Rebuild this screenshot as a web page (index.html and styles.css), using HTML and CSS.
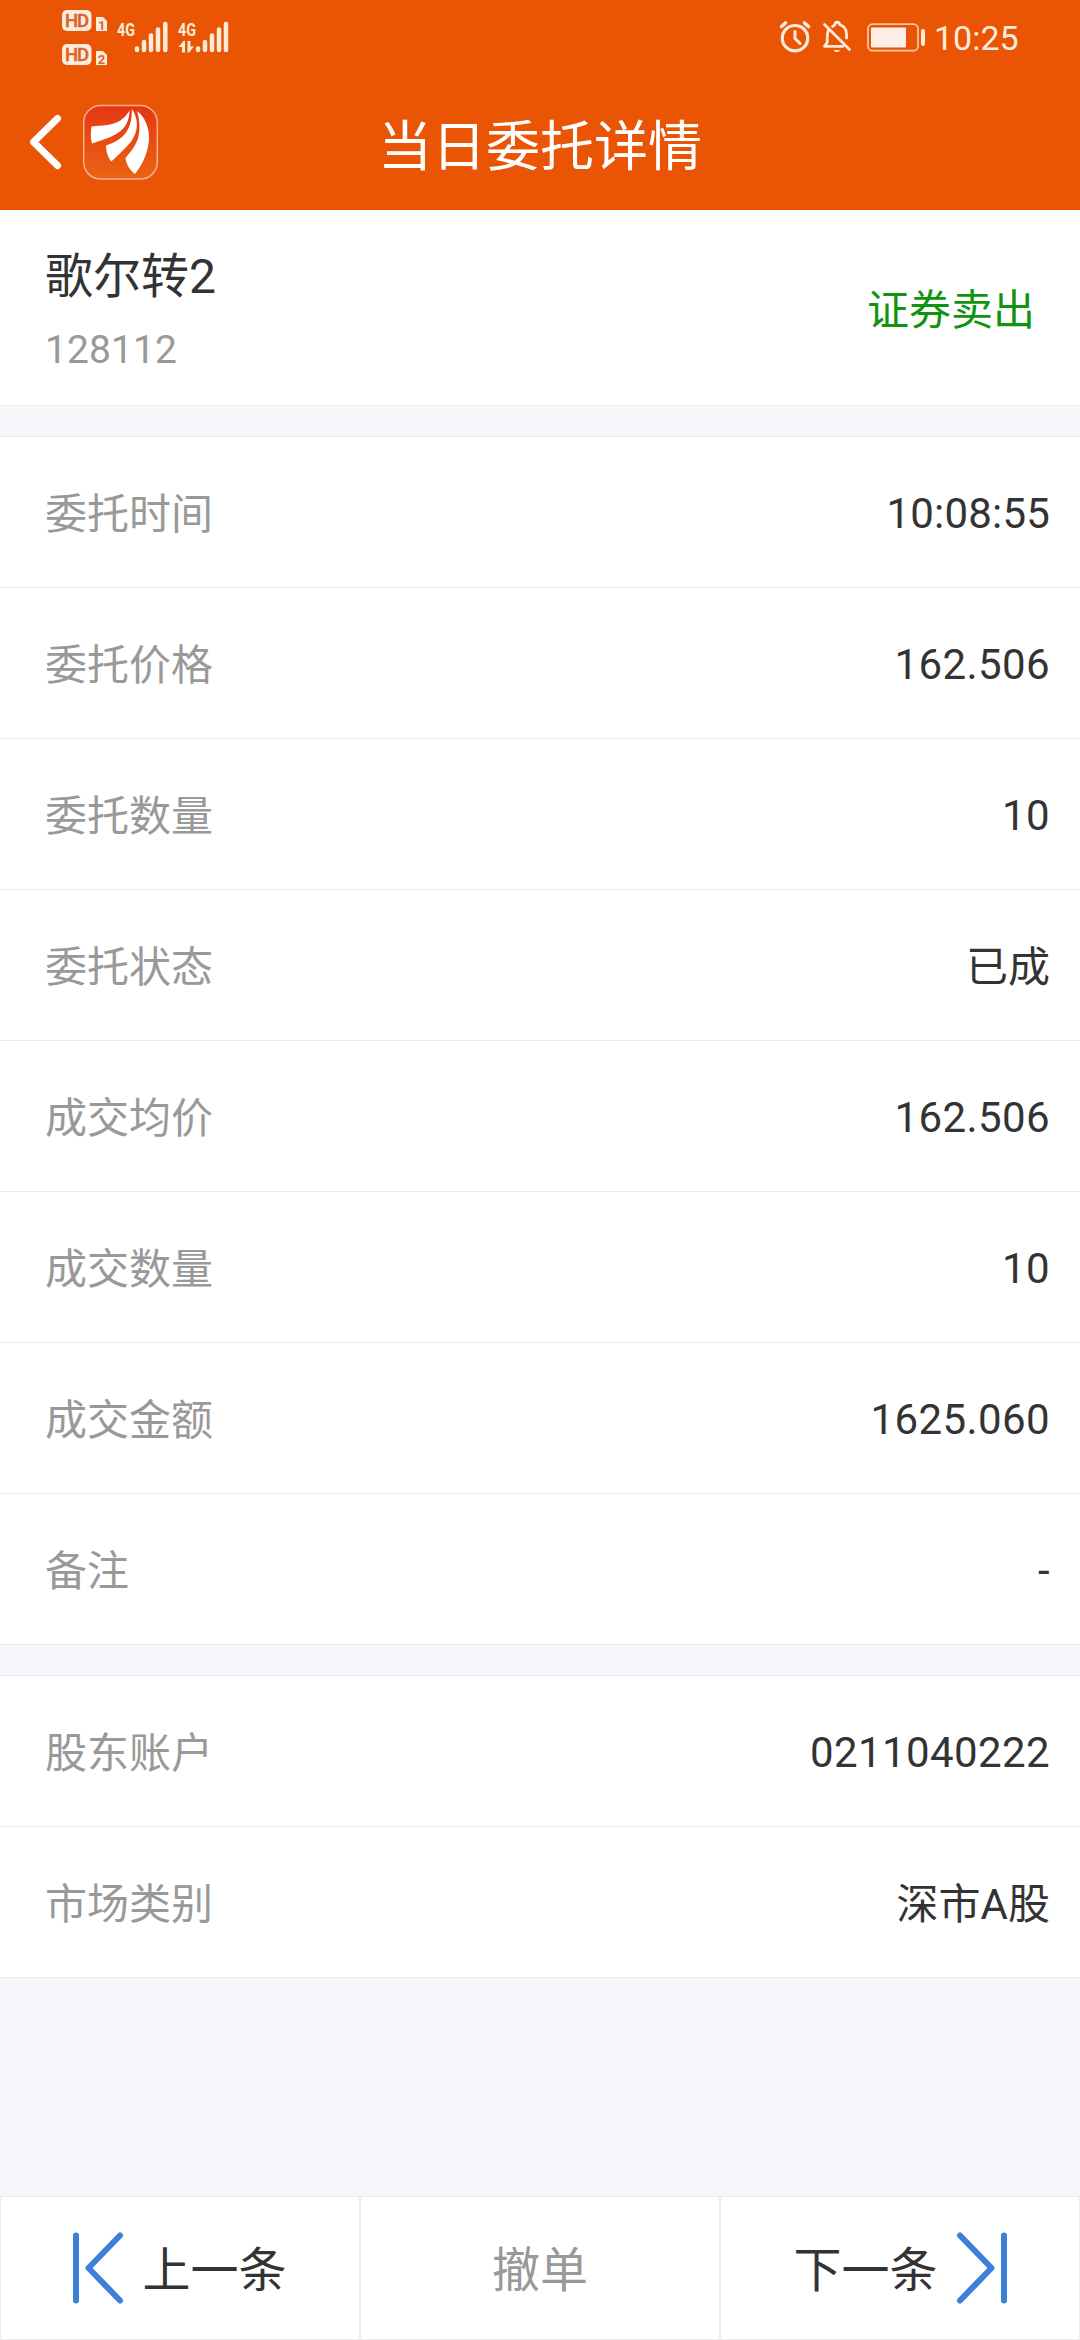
FILE: index.html
```html
<!DOCTYPE html>
<html lang="zh-CN">
<head>
<meta charset="utf-8">
<title>当日委托详情</title>
<link rel="stylesheet" href="styles.css">
</head>
<body>
<div class="screen">
  <header class="header">
    <div class="status">
      <svg class="status-left" width="180" height="70" viewBox="60 0 180 70">
        <g fill="#fdebdd">
          <rect x="62" y="10" width="29.500" height="21" rx="5"/>
          <rect x="62" y="44" width="29.500" height="21" rx="5"/>
          <path d="M96 17h7l4 4v10H96zM96 51h7l4 4v10H96z"/>
        </g>
        <g class="hd">
          <text x="65" y="27" textLength="24">HD</text>
          <text x="65" y="61" textLength="24">HD</text>
        </g>
        <g class="sim">
          <text x="98" y="29.500">1</text>
          <text x="97.800" y="63.500">2</text>
        </g>
        <g class="net">
          <text x="117" y="35.500" textLength="18" lengthAdjust="spacingAndGlyphs">4G</text>
          <text x="178" y="35.500" textLength="18" lengthAdjust="spacingAndGlyphs">4G</text>
        </g>
        <g stroke="#fdebd8" stroke-width="4.500" stroke-linecap="round">
          <path d="M137 48.500v1.500M144 42v8M151 35.500V50M158 29.500V50M165.300 24V50"/>
          <path d="M198 48.500v1.500M205 42v8M212 35.500V50M219 29.500V50M226 24V50"/>
        </g>
        <path fill="#fdebd8" d="M178.500 47l5-6h1.500v11.500h-3V47zM187.500 41h3v5.500h3.500l-5 6h-1.500z"/>
      </svg>
      <div class="status-right">
        <svg width="145" height="40" viewBox="778 18 145 40" fill="none" stroke="#fdebdd" stroke-width="3.200" stroke-linecap="round" stroke-linejoin="round" overflow="visible">
          <circle cx="795" cy="38.200" r="12.700"/>
          <path d="M795 31.500v7l5 5" stroke-width="3"/>
          <path d="M781.500 26.500l4-3.500M808.500 26.500l-4-3.500" stroke-width="3.600"/>
          <path d="M824.500 24.500l25 25" stroke-width="2.800"/>
          <path d="M828.500 30c-1.500 3-1.300 7-1.300 12.500l-2.700 3.800h18.500M832.500 26.500c1-.8 2.500-1.300 2.500-2 0-3 4.500-3 4.500 0 4.500 1.500 7 5 7 9.500v4" stroke-width="2.800"/>
          <path d="M833.500 50h6.500c-.8 2.800-5.700 2.800-6.500 0z" fill="#fdebdd" stroke="none"/>
          <rect x="868" y="24.200" width="50" height="26.500" rx="4.500" stroke-width="1.700" stroke="#fbc9a4"/>
          <rect x="871" y="27.500" width="35" height="20" rx="1" fill="#fdeee5" stroke="none"/>
          <rect x="921" y="29" width="4" height="17" rx="2" fill="#fdebdd" stroke="none"/>
        </svg>
        <span class="clock">10:25</span>
      </div>
    </div>
    <div class="navbar">
      <div class="nav-left">
        <svg width="140" height="80" viewBox="20 103 140 80">
          <defs>
            <linearGradient id="logo" x1="0" y1="0" x2="0" y2="1">
              <stop offset="0" stop-color="#e53614"/>
              <stop offset="1" stop-color="#ea6512"/>
            </linearGradient>
          </defs>
          <path d="M57.500 118.500L33.500 142l24 23.500" fill="none" stroke="#fff" stroke-width="7" stroke-linecap="round" stroke-linejoin="round"/>
          <rect x="83.700" y="105.500" width="73.600" height="73.600" rx="17" fill="url(#logo)" stroke="#f6b08d" stroke-width="1.500"/>
          <g fill="#fff">
            <path d="M91.500 126.500c2-.6 10-.6 16-1.500 10-1.500 17-6 22-14.500 0 9-3.500 17-11 22-7 5-16 7.500-26.500 11-1.500-5-1.500-11-.5-17z"/>
            <path d="M131.800 109c4.500 6 6 14 4.500 21-2 9-7 14-13 20-4 4-8 8-12 11.500-3.500-4.500-5-9-5.300-16 7-2.500 15-6 20-13 4.500-6.500 6-14 5.800-23.500z"/>
            <path d="M137 111c8 6 12.500 17 12 28-.5 12-6 25-14 35-5-4-8.500-9-9.500-16 5-6 10-12 12.300-19 2.700-9 2-19-.8-28z"/>
          </g>
        </svg>
      </div>
      <h1 class="title">当日委托详情</h1>
      <div></div>
    </div>
  </header>

  <section class="summary">
    <div>
      <div class="name">歌尔转2</div>
      <div class="code">128112</div>
    </div>
    <div class="side">证券卖出</div>
  </section>

  <section class="list">
    <div class="row"><span class="label">委托时间</span><span class="value time">10:08:55</span></div>
    <div class="row"><span class="label">委托价格</span><span class="value">162.506</span></div>
    <div class="row"><span class="label">委托数量</span><span class="value">10</span></div>
    <div class="row"><span class="label">委托状态</span><span class="value cjk">已成</span></div>
    <div class="row"><span class="label">成交均价</span><span class="value">162.506</span></div>
    <div class="row"><span class="label">成交数量</span><span class="value">10</span></div>
    <div class="row"><span class="label">成交金额</span><span class="value">1625.060</span></div>
    <div class="row"><span class="label">备注</span><span class="value">-</span></div>
  </section>

  <section class="list">
    <div class="row"><span class="label">股东账户</span><span class="value">0211040222</span></div>
    <div class="row"><span class="label">市场类别</span><span class="value cjk">深市A股</span></div>
  </section>

  <footer class="footer">
    <div class="action">
      <svg width="50" height="72" viewBox="0 0 50 72" fill="none" stroke="#3b80d9" stroke-width="6" stroke-linecap="round" stroke-linejoin="round">
        <path d="M3 3.500v65M47 3.500L15.500 36 47 68.500"/>
      </svg>
      <span>上一条</span>
    </div>
    <div class="action disabled"><span>撤单</span></div>
    <div class="action">
      <span>下一条</span>
      <svg width="50" height="72" viewBox="0 0 50 72" fill="none" stroke="#3b80d9" stroke-width="6" stroke-linecap="round" stroke-linejoin="round">
        <path d="M47 3.500v65M3 3.500L34.500 36 3 68.500"/>
      </svg>
    </div>
  </footer>
</div>
</body>
</html>
```
FILE: styles.css
```css
* {
  box-sizing: border-box;
}

body {
  margin: 0;
  font-family: Roboto, "Noto Sans CJK SC", sans-serif;
  color: #333;
  background: #f6f7fa;
}

.screen {
  display: flex;
  flex-direction: column;
  width: 1080px;
  height: 2340px;
}

.header {
  height: 210px;
  background: #e95504;
  color: #fff;
}

.status {
  display: flex;
  justify-content: space-between;
  height: 76px;
  padding: 0 60px;
}

.status svg {
  display: block;
}

.status-right {
  display: flex;
  align-items: flex-start;
  gap: 11px;
  padding-top: 18px;
}

.clock {
  width: 86px;
  font-size: 34px;
  line-height: 40px;
  color: #fdebdd;
}

.hd {
  font: 500 18.5px Roboto, sans-serif;
  fill: #d9642a;
  stroke: #d9642a;
  stroke-width: 0.4px;
}

.sim {
  font: 700 13px Roboto, sans-serif;
  fill: #d9642a;
}

.net {
  font: 700 19px Roboto, sans-serif;
  fill: #fdebd8;
}

.navbar {
  display: grid;
  grid-template-columns: 1fr auto 1fr;
  align-items: center;
  height: 134px;
  padding: 0 20px;
}

.nav-left svg {
  display: block;
}

.title {
  margin: 10px 0 0;
  font-size: 54px;
  font-weight: 400;
  line-height: 80px;
}

.summary {
  display: flex;
  justify-content: space-between;
  height: 196px;
  padding: 31px 45px 0 45px;
  background: #fff;
  border-bottom: 1px solid #ebebeb;
}

.name {
  font-size: 48px;
  line-height: 72px;
}

.code {
  margin-top: 7px;
  font-size: 39px;
  line-height: 60px;
  letter-spacing: 0.1px;
  color: #999;
}

.side {
  padding-top: 38px;
  font-size: 42px;
  line-height: 64px;
  color: #109410;
}

.list {
  margin-top: 30px;
  background: #fff;
  border-top: 1px solid #ebebeb;
}

.row {
  display: flex;
  align-items: center;
  justify-content: space-between;
  height: 151px;
  padding: 0 30px 0 45px;
  border-bottom: 1px solid #ebebeb;
  font-size: 42px;
  line-height: 64px;
}

.label {
  padding-top: 5px;
  color: #999;
}

.value {
  padding-top: 4px;
  letter-spacing: 0.4px;
}

.value.time {
  letter-spacing: 0.2px;
}

.value.cjk {
  padding-top: 5px;
  letter-spacing: 0;
}

.footer {
  display: grid;
  grid-template-columns: repeat(3, 1fr);
  height: 144px;
  margin-top: auto;
}

.action {
  display: flex;
  align-items: center;
  justify-content: center;
  gap: 19px;
  background: #fff;
  border: 1px solid #ebebeb;
  font-size: 48px;
  line-height: 72px;
}

.action span {
  padding-top: 5px;
}

.action svg {
  display: block;
}

.disabled {
  color: #999;
}
```
